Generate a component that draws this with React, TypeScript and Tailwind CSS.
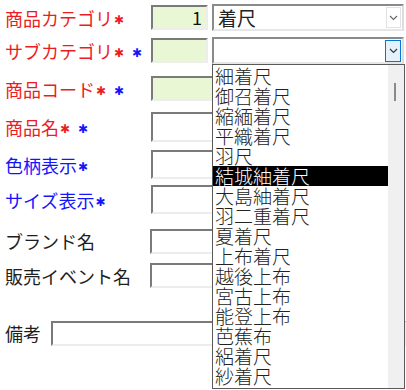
import React from "react";

const RED = "text-[#ec1c24]";
const BLUE = "text-[#1414ff]";

const inputBase =
  "h-[25px] border-2 border-t-[#7a7a7a] border-l-[#7a7a7a] border-b-[#ededed] border-r-[#ededed] box-border";

function Star({ color, ml = 1 }: { color: string; ml?: number }) {
  return (
    <span
      className={`inline-block align-middle text-[12px] leading-[12px] relative top-[-1px] ${color}`}
      style={{ fontFamily: '"DejaVu Sans", sans-serif', marginLeft: ml }}
    >
      ✱
    </span>
  );
}

function Chevron({ color = "#555" }: { color?: string }) {
  return (
    <svg width="9" height="6" viewBox="0 0 9 6">
      <path d="M1 1 L4.5 4.5 L8 1" fill="none" stroke={color} strokeWidth="1.1" />
    </svg>
  );
}

const items = [
  "細着尺",
  "御召着尺",
  "縮緬着尺",
  "平織着尺",
  "羽尺",
  "結城紬着尺",
  "大島紬着尺",
  "羽二重着尺",
  "夏着尺",
  "上布着尺",
  "越後上布",
  "宮古上布",
  "能登上布",
  "芭蕉布",
  "絽着尺",
  "紗着尺",
];

export default function App() {
  const font = { fontFamily: '"Noto Sans CJK JP", "Noto Sans", sans-serif' };
  return (
    <div className="relative w-[406px] h-[390px] bg-white overflow-hidden" style={font}>
      <div className="flex flex-col pl-[5px] pt-[4px] text-[18px] leading-[20px]">
        {/* Row 1 */}
        <div className="flex items-center h-[27px]">
          <div className={`w-[146px] ${RED}`}>
            商品カテゴリ<Star color={RED} />
          </div>
          <div className={`${inputBase} w-[57px] bg-[#eaf7d5] text-right pr-[4px] text-[#111] leading-[21px]`}>1</div>
          <div className="ml-[4px] w-[192px] h-[27px] border-2 border-t-[#8a8a8a] border-l-[#8a8a8a] border-b-[#e6e6e6] border-r-[#dcdcdc] flex items-center justify-between pl-[4px] pr-[1px] text-[#222] box-border">
            <span className="text-[19px]">着尺</span>
            <div className="w-[15px] h-[21px] border border-[#e2e2e2] flex items-center justify-center">
              <Chevron color="#666" />
            </div>
          </div>
        </div>
        {/* Row 2 */}
        <div className="flex items-center h-[27px] mt-[6px]">
          <div className={`w-[146px] ${RED}`}>
            サブカテゴリ<Star color={RED} />
            <Star color={BLUE} ml={8} />
          </div>
          <div className={`${inputBase} w-[57px] bg-[#eaf7d5]`}></div>
          <div className="ml-[4px] w-[192px] h-[27px] border-2 border-t-[#8a8a8a] border-l-[#8a8a8a] border-b-[#e6e6e6] border-r-[#dcdcdc] flex items-center justify-end pr-[1px] box-border">
            <div className="w-[16px] h-[22px] border border-[#0078d7] bg-[#e5f1fb] flex items-center justify-center">
              <Chevron color="#333" />
            </div>
          </div>
        </div>
        {/* Row 3 */}
        <div className="flex items-center h-[27px] mt-[11px]">
          <div className={`w-[146px] ${RED}`}>
            商品コード<Star color={RED} />
            <Star color={BLUE} ml={8} />
          </div>
          <div className={`${inputBase} w-[250px] bg-[#eaf7d5]`}></div>
        </div>
        {/* Row 4 */}
        <div className="flex items-center h-[31px] mt-[9px]">
          <div className={`w-[146px] ${RED}`}>
            商品名<Star color={RED} />
            <Star color={BLUE} ml={8} />
          </div>
          <div className="h-[30px] w-[250px] border-2 border-t-[#7a7a7a] border-l-[#7a7a7a] border-b-[#ededed] border-r-[#ededed] box-border bg-white"></div>
        </div>
        {/* Row 5 */}
        <div className="flex items-center h-[29px] mt-[8px]">
          <div className={`w-[146px] ${BLUE}`}>
            色柄表示<Star color={BLUE} />
          </div>
          <div className="h-[29px] w-[250px] border-2 border-t-[#7a7a7a] border-l-[#7a7a7a] border-b-[#ededed] border-r-[#ededed] box-border bg-white"></div>
        </div>
        {/* Row 6 */}
        <div className="flex items-center h-[29px] mt-[6px]">
          <div className={`w-[146px] ${BLUE}`}>
            サイズ表示<Star color={BLUE} />
          </div>
          <div className="h-[29px] w-[250px] border-2 border-t-[#7a7a7a] border-l-[#7a7a7a] border-b-[#ededed] border-r-[#ededed] box-border bg-white"></div>
        </div>
        {/* Row 7 */}
        <div className="flex items-center h-[26px] mt-[14px]">
          <div className="w-[145px] text-[#1e1e1e]">ブランド名</div>
          <div className={`${inputBase} w-[250px] bg-white`}></div>
        </div>
        {/* Row 8 */}
        <div className="flex items-center h-[27px] mt-[8px]">
          <div className="w-[145px] text-[#1e1e1e]">販売イベント名</div>
          <div className={`${inputBase} w-[250px] bg-white`}></div>
        </div>
        {/* Row 9 */}
        <div className="flex items-center h-[26px] mt-[31px]">
          <div className="w-[47px] text-[#1e1e1e]">備考</div>
          <div className={`${inputBase} w-[360px] bg-white`}></div>
        </div>
      </div>

      {/* Dropdown list */}
      <div className="absolute left-[212px] top-[64px] w-[193px] h-[325px] border border-[#5a5a5a] bg-white flex">
        <div className="flex-1 flex flex-col pt-[1px]">
          {items.map((t) => (
            <div
              key={t}
              className={`h-[20px] leading-[20px] text-[19px] pl-[2px] whitespace-nowrap ${
                t === "結城紬着尺" ? "bg-black text-white" : "text-[#222]"
              }`}
              style={{ fontWeight: 300 }}
            >
              {t}
            </div>
          ))}
        </div>
        <div className="w-[16px] bg-[#f0f0f0] relative">
          <div className="absolute left-[6px] top-[18px] w-[2px] h-[18px] bg-[#8a8a8a]"></div>
        </div>
      </div>
    </div>
  );
}
